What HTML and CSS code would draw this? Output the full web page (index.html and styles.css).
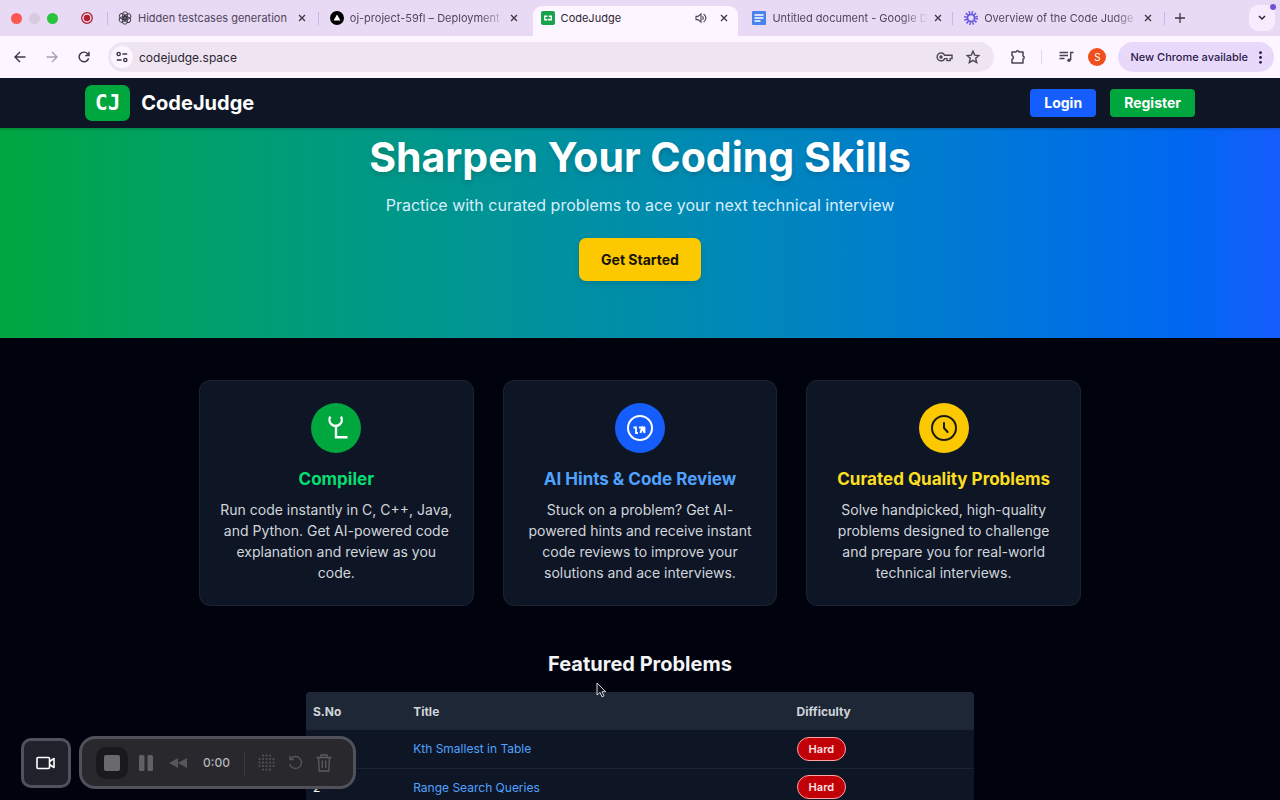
FILE: index.html
```html
<!DOCTYPE html>
<html lang="en">
  <head>
    <meta charset="UTF-8" />
    <meta name="viewport" content="width=device-width, initial-scale=1.0" />
    <title>CodeJudge</title>
    <link rel="stylesheet" href="styles.css">
  </head>
  <body>
    <div class="tab-strip">
      <div class="window-controls">
        <span class="light red"></span>
        <span class="light gray"></span>
        <span class="light green"></span>
      </div>
      <div class="pinned-tab">
        <svg width="14" height="14" viewBox="0 0 14 14"><circle cx="7" cy="7" r="5.3" fill="none" stroke="#b3202c" stroke-width="1.3"/><circle cx="7" cy="7" r="3.2" fill="#b3202c"/></svg>
      </div>
      <div class="tabs">
        <div class="tab">
          <svg class="favicon" viewBox="0 0 14 14" fill="none" stroke="#3c3743" stroke-width="0.9"><rect x="4.6" y="0.8" width="5" height="7.4" rx="2.4"/><rect x="4.6" y="0.8" width="5" height="7.4" rx="2.4" transform="rotate(60 7 7)"/><rect x="4.6" y="0.8" width="5" height="7.4" rx="2.4" transform="rotate(120 7 7)"/><rect x="4.6" y="0.8" width="5" height="7.4" rx="2.4" transform="rotate(180 7 7)"/><rect x="4.6" y="0.8" width="5" height="7.4" rx="2.4" transform="rotate(240 7 7)"/><rect x="4.6" y="0.8" width="5" height="7.4" rx="2.4" transform="rotate(300 7 7)"/></svg>
          <span class="tab-title">Hidden testcases generation</span>
          <button class="tab-close" aria-label="Close tab"><svg width="8" height="8" viewBox="0 0 8 8"><path d="M1 1l6 6M7 1L1 7"/></svg></button>
        </div>
        <div class="tab no-divider">
          <svg class="favicon" viewBox="0 0 14 14"><circle cx="7" cy="7" r="7" fill="#000"/><path d="M7 3.6l3.4 5.8H3.6z" fill="#fff"/></svg>
          <span class="tab-title fade">oj-project-59fl – Deployment</span>
          <button class="tab-close" aria-label="Close tab"><svg width="8" height="8" viewBox="0 0 8 8"><path d="M1 1l6 6M7 1L1 7"/></svg></button>
        </div>
        <div class="tab active no-divider">
          <svg class="favicon" viewBox="0 0 14 14"><rect width="14" height="14" rx="2" fill="#16a34a"/><path d="M6.4 5.2H3.8v3.6h2.6M7.8 5.2h2.5v3.6H7.8V7.6" fill="none" stroke="#fff" stroke-width="1.4"/></svg>
          <span class="tab-title">CodeJudge</span>
          <button class="tab-audio" aria-label="Mute tab"><svg width="12" height="12" viewBox="0 0 12 12" fill="none" stroke="#4a4453" stroke-width="1.1"><path d="M1 4.4h2L6 2v8L3 7.6H1z"/><path d="M7.6 4.2q1.4 1.8 0 3.6M8.6 1.8q4.6 4.2 0 8.4"/></svg></button>
          <button class="tab-close" aria-label="Close tab"><svg width="8" height="8" viewBox="0 0 8 8"><path d="M1 1l6 6M7 1L1 7"/></svg></button>
        </div>
        <div class="tab">
          <svg class="favicon" viewBox="0 0 14 14"><rect width="14" height="14" rx="1" fill="#4a82ee"/><path d="M2.5 4h9M2.5 7h9M2.5 10h6" stroke="#fff" stroke-width="1.4"/></svg>
          <span class="tab-title fade">Untitled document - Google D</span>
          <button class="tab-close" aria-label="Close tab"><svg width="8" height="8" viewBox="0 0 8 8"><path d="M1 1l6 6M7 1L1 7"/></svg></button>
        </div>
        <div class="tab">
          <svg class="favicon" viewBox="0 0 14 14" fill="none" stroke="#6657e0"><circle cx="7" cy="7" r="3.6" stroke-width="1.8"/><circle cx="7" cy="7" r="5.6" stroke-width="2.8" stroke-dasharray="1.4 1.53"/></svg>
          <span class="tab-title fade">Overview of the Code Judge</span>
          <button class="tab-close" aria-label="Close tab"><svg width="8" height="8" viewBox="0 0 8 8"><path d="M1 1l6 6M7 1L1 7"/></svg></button>
        </div>
      </div>
      <button class="new-tab" aria-label="New tab"><svg width="10" height="10" viewBox="0 0 10 10"><path d="M5 0v10M0 5h10" stroke="#3c3743" stroke-width="1.3"/></svg></button>
      <button class="tab-search" aria-label="Search tabs"><svg width="8" height="6" viewBox="0 0 8 6"><path d="M1 1l3 3 3-3" fill="none" stroke="#2b2633" stroke-width="1.5"/></svg></button>
    </div>

    <div class="toolbar">
      <div class="nav-buttons">
        <button aria-label="Back"><svg width="12" height="12" viewBox="0 0 12 12"><path d="M11.5 6H1.2M6 1L1 6l5 5"/></svg></button>
        <button class="disabled" aria-label="Forward"><svg width="12" height="12" viewBox="0 0 12 12"><path d="M.5 6h10.3M6 1l5 5-5 5"/></svg></button>
        <button aria-label="Reload"><svg width="12" height="12" viewBox="0 0 12 12"><path d="M10.6 7.2A4.8 4.8 0 1 1 9.6 2.8L11 4.3M11 .8v3.7H7.3"/></svg></button>
      </div>
      <div class="omnibox">
        <button class="site-info" aria-label="Site information"><svg width="12" height="12" viewBox="0 0 12 12" fill="none" stroke="#3c3743" stroke-width="1.4"><circle cx="2.7" cy="3" r="1.6"/><path d="M6.4 3h4.8M.8 9h4.8"/><circle cx="9.3" cy="9" r="1.6"/></svg></button>
        <input type="text" value="codejudge.space" aria-label="Address">
        <button aria-label="Passwords"><svg width="17" height="12" viewBox="0 0 17 12" fill="none" stroke="#4a4453" stroke-width="1.4"><path d="M8.7 4.2A4 4 0 1 0 8.7 7.6H11v2h3.2v-2H16V4.2z"/><circle cx="5" cy="6" r="1" fill="#4a4453"/></svg></button>
        <button aria-label="Bookmark"><svg width="14" height="14" viewBox="0 0 14 14" fill="none" stroke="#4a4453" stroke-width="1.4"><path d="M7 1.2l1.7 3.9 4.2.4-3.2 2.8 1 4.2L7 10.300l-3.700 2.200 1-4.200L1.100 5.500l4.200-.4z"/></svg></button>
      </div>
      <button class="tool extensions" aria-label="Extensions"><svg width="16" height="16" viewBox="0 0 16 16"><path d="M2 3h3.900a1.700 1.700 0 0 1 3.200 0H13v4a1.700 1.700 0 0 1 0 3.200V14H2v-3.700a2 2 0 0 0 0-3.800z" fill="none" stroke="#4a4453" stroke-width="1.5" stroke-linejoin="round"/></svg></button>
      <span class="tool-divider"></span>
      <button class="tool" aria-label="Media controls"><svg width="15" height="12" viewBox="0 0 15 12" fill="none" stroke="#4a4453" stroke-width="1.4"><path d="M.5 1.5h8.500M.5 4.500h8.500M.5 7.500h5M14.500 1.500h-2.800V9"/><circle cx="10" cy="9.200" r="1.700" fill="#4a4453" stroke="none"/></svg></button>
      <button class="avatar" aria-label="Profile">S</button>
      <button class="update">New Chrome available <svg width="3" height="13" viewBox="0 0 3 13" fill="#2a1a4a"><circle cx="1.5" cy="1.7" r="1.4"/><circle cx="1.5" cy="6.5" r="1.4"/><circle cx="1.5" cy="11.3" r="1.4"/></svg></button>
    </div>

    <div class="page">
      <nav class="navbar">
        <div class="navbar-inner">
          <a class="brand" href="#"><span class="brand-logo">CJ</span>CodeJudge</a>
          <div class="nav-links">
            <a class="btn btn-blue" href="#">Login</a>
            <a class="btn btn-green" href="#">Register</a>
          </div>
        </div>
      </nav>

      <section class="hero">
        <h1>Sharpen Your Coding Skills</h1>
        <p>Practice with curated problems to ace your next technical interview</p>
        <a class="cta" href="#">Get Started</a>
      </section>

      <section class="features">
        <div class="card">
          <div class="card-icon green">
            <svg width="28" height="28" viewBox="0 0 28 28" fill="none" stroke="#fff" stroke-width="2.4"><path d="M8.300 2.600A6.200 6.200 0 1 0 19 2.600M14 10.500V23.200H25.500"/></svg>
          </div>
          <h3>Compiler</h3>
          <p>Run code instantly in C, C++, Java, and Python. Get AI-powered code explanation and review as you code.</p>
        </div>
        <div class="card">
          <div class="card-icon blue">
            <svg width="28" height="28" viewBox="0 0 28 28" fill="none" stroke="#fff" stroke-width="2"><circle cx="14" cy="14" r="12"/><path d="M7.500 13.500H10V19h2M13 13.500h3l-1.500 5.200M16 13.500h3M18.500 13v6M14.500 19l2-5 2 5" stroke-width="1.8"/></svg>
          </div>
          <h3>AI Hints &amp; Code Review</h3>
          <p>Stuck on a problem? Get AI-powered hints and receive instant code reviews to improve your solutions and ace interviews.</p>
        </div>
        <div class="card">
          <div class="card-icon yellow">
            <svg width="28" height="28" viewBox="0 0 28 28" fill="none" stroke="#1a1a10" stroke-width="2" stroke-linecap="round" stroke-linejoin="round"><circle cx="14" cy="14" r="12"/><path d="M14 9v5l3.600 4"/></svg>
          </div>
          <h3>Curated Quality Problems</h3>
          <p>Solve handpicked, high-quality problems designed to challenge and prepare you for real-world technical interviews.</p>
        </div>
      </section>

      <section class="problems">
        <h2>Featured Problems</h2>
        <table>
          <thead>
            <tr><th class="col-no">S.No</th><th class="col-title">Title</th><th>Difficulty</th></tr>
          </thead>
          <tbody>
            <tr><td>1</td><td><a href="#">Kth Smallest in Table</a></td><td><span class="pill">Hard</span></td></tr>
            <tr><td>2</td><td><a href="#">Range Search Queries</a></td><td><span class="pill">Hard</span></td></tr>
          </tbody>
        </table>
      </section>
    </div>

    <div class="recorder">
      <button class="camera" aria-label="Camera"><svg width="20" height="14" viewBox="0 0 20 14" fill="none" stroke="#fff" stroke-width="1.6" stroke-linejoin="round"><rect x="1" y="1.5" width="12.5" height="11" rx="1"/><path d="M13.5 5.5L18 2.5v9l-4.5-3"/></svg></button>
      <div class="recorder-bar">
        <button class="stop" aria-label="Stop"><span></span></button>
        <button class="pause" aria-label="Pause"><svg width="14" height="16" viewBox="0 0 14 16" fill="#606065"><rect width="5.5" height="16" rx="1.5"/><rect x="8.5" width="5.5" height="16" rx="1.5"/></svg></button>
        <button class="rewind" aria-label="Rewind"><svg width="18" height="10" viewBox="0 0 18 10" fill="#56565b"><path d="M9 0v10L0 5zM18 0v10L9 5z"/></svg></button>
        <span class="time">0:00</span>
        <span class="bar-divider"></span>
        <button class="effects" aria-label="Effects"><svg width="17" height="17" viewBox="0 0 17 17" fill="none" stroke="#505055" stroke-width="2.2" stroke-linecap="round"><path d="M5 1.500v14.100M8.500 1.500v14.100M12 1.500v14.100M1.500 5h14.100M1.500 8.500h14.100M1.500 12h14.100" stroke-dasharray="0.1 3.4"/></svg></button>
        <button class="restart" aria-label="Restart"><svg width="15" height="15" viewBox="0 0 15 15" fill="none" stroke="#535358" stroke-width="1.4"><path d="M2.500 4A6 6 0 1 1 1.600 9M2 .8v3.700h3.800"/></svg></button>
        <button class="delete" aria-label="Delete"><svg width="16" height="18" viewBox="0 0 16 18" fill="none" stroke="#5c5c61" stroke-width="1.3"><path d="M.5 3.500h15M5 3.500v-2.500h6v2.500M2.500 3.500l.7 13.500h9.600l.7-13.500M6.300 6.500v7.500M9.700 6.500v7.500"/></svg></button>
      </div>
    </div>

    <svg class="cursor" width="11" height="16" viewBox="0 0 11 16"><path d="M1 1v12l3-2.600 2 4.400 2-.9-2-4.200h3.800z" fill="#10131c" stroke="#d5d7de" stroke-width="1"/></svg>
  </body>
</html>
```

FILE: styles.css
```css
* {
  box-sizing: border-box;
  margin: 0;
  padding: 0;
}

body {
  display: flex;
  flex-direction: column;
  height: 100vh;
  overflow: hidden;
  font-family: Inter, "Liberation Sans", sans-serif;
  color: #fff;
  background-color: #00020e;
}

a {
  text-decoration: none;
}

button {
  display: flex;
  align-items: center;
  justify-content: center;
  flex: none;
  border: none;
  background: none;
  font-family: inherit;
  cursor: pointer;
}

svg {
  display: block;
  flex: none;
}

/* browser tabs */
.tab-strip {
  display: flex;
  align-items: center;
  flex: none;
  height: 36px;
  background-color: #e8daf4;
  position: relative;
}

.window-controls {
  display: flex;
  gap: 7px;
  padding-left: 11px;
}

.light {
  width: 11px;
  height: 11px;
  border-radius: 50%;
}

.light.red {
  background-color: #fb5753;
}

.light.gray {
  background-color: #d8cbe0;
}

.light.green {
  background-color: #26c53d;
}

.pinned-tab {
  padding: 0 13px 0 22px;
}

.tabs {
  display: flex;
  align-items: center;
  flex: 0 1 1058px;
  min-width: 0;
  height: 100%;
  position: relative;
}

.tabs::before,
.tab::after {
  content: "";
  position: absolute;
  right: 0;
  top: 12px;
  width: 1px;
  height: 13px;
  background-color: #cbb4e8;
}

.tabs::before {
  left: 0;
}

.tab {
  display: flex;
  align-items: center;
  flex: 1;
  min-width: 0;
  height: 100%;
  padding: 0 12px 0 11px;
  position: relative;
  font-size: 11px;
  color: #4f465c;
}

.tab.no-divider::after {
  display: none;
}

.tab.active {
  height: 30px;
  margin: 6px 3px 0 2px;
  padding: 0 9px 6px 8px;
  border-radius: 9px 9px 0 0;
  background-color: #fdf5ff;
  color: #2b2633;
}

.favicon {
  width: 14px;
  height: 14px;
  margin-right: 6px;
}

.tab-title {
  flex: 1;
  white-space: nowrap;
}

.tab-title.fade {
  -webkit-mask-image: linear-gradient(to right, #000 130px, transparent 156px);
  mask-image: linear-gradient(to right, #000 130px, transparent 156px);
}

.tab-close {
  width: 10px;
  height: 16px;
  margin-left: 5px;
}

.tab-audio {
  margin-right: 7px;
}

.tab-close path {
  fill: none;
  stroke: #3c3743;
  stroke-width: 1.3;
}

.new-tab {
  width: 30px;
  height: 28px;
}

.tab-search {
  width: 26px;
  height: 26px;
  margin: 0 5px 0 auto;
  border-radius: 9px;
  background-color: #f7ecfd;
}

.tab-search::after {
  content: "";
  position: absolute;
  top: 4px;
  right: 4px;
  width: 6px;
  height: 6px;
  border-radius: 50%;
  background-color: #6b52d6;
}

/* browser toolbar */
.toolbar {
  display: flex;
  align-items: center;
  flex: none;
  height: 42px;
  padding: 0 6px 0 14px;
  background-color: #fdf5ff;
}

.nav-buttons {
  display: flex;
  gap: 20px;
  margin-right: 18px;
}

.nav-buttons path {
  fill: none;
  stroke: #3c3743;
  stroke-width: 1.4;
}

.nav-buttons .disabled path {
  stroke: #a9a0b0;
}

.omnibox {
  display: flex;
  align-items: center;
  flex: 1;
  gap: 13px;
  height: 30px;
  padding: 0 14px 0 3px;
  border-radius: 15px;
  background-color: #eee5f1;
}

.site-info {
  width: 22px;
  height: 22px;
  border-radius: 50%;
  background-color: #fdf5ff;
}

.omnibox input {
  flex: 1;
  min-width: 0;
  margin-left: -7px;
  border: none;
  outline: none;
  background: none;
  font-family: inherit;
  font-size: 12px;
  color: #2b2633;
}

.extensions {
  margin-left: 16px;
}

.tool-divider {
  width: 1px;
  height: 14px;
  margin: 0 17px 0 15px;
  background-color: #e6d5f2;
}

.avatar {
  width: 18px;
  height: 18px;
  margin: 0 12px 0 14px;
  border-radius: 50%;
  background-color: #f04e1a;
  font-size: 10px;
  color: #fff;
}

.update {
  gap: 11px;
  height: 30px;
  padding: 0 12px;
  border-radius: 15px;
  background-color: #e8d9fb;
  font-size: 11px;
  font-weight: 500;
  color: #2a1a4a;
}

/* page */
.page {
  flex: 1;
  min-height: 0;
  overflow: hidden;
}

.navbar {
  position: relative;
  background-color: #0e1625;
  box-shadow: 0 1px 3px rgba(0, 0, 0, 0.2);
}

.navbar-inner {
  display: flex;
  align-items: center;
  justify-content: space-between;
  max-width: 1138px;
  height: 50px;
  margin: 0 auto;
  padding: 0 14px;
}

.brand {
  display: flex;
  align-items: center;
  gap: 11px;
  font-size: 20px;
  font-weight: 700;
  color: #fff;
}

.brand-logo {
  padding: 0 10px;
  border-radius: 7px;
  background-color: #00a63e;
  font-family: "DejaVu Sans Mono", monospace;
  font-size: 21px;
  line-height: 36px;
}

.nav-links {
  display: flex;
  gap: 14px;
}

.btn {
  padding: 0 14px;
  border-radius: 4px;
  font-size: 14px;
  font-weight: 700;
  line-height: 28px;
  color: #fff;
}

.btn-blue {
  background-color: #155dfc;
}

.btn-green {
  background-color: #00a63e;
}

.hero {
  display: flex;
  flex-direction: column;
  align-items: center;
  padding: 4px 14px 57px;
  background-image: linear-gradient(to right in oklab, #00a63e, #155dfc);
  text-align: center;
}

.hero h1 {
  margin-bottom: 10px;
  font-size: 41px;
  font-weight: 700;
  line-height: 50px;
  text-shadow: 0 3px 5px rgba(0, 0, 0, 0.15);
}

.hero p {
  margin-bottom: 20px;
  font-size: 16px;
  line-height: 26px;
  color: #d8eefc;
}

.cta {
  padding: 0 22px;
  border-radius: 7px;
  background-color: #fcc800;
  box-shadow: 0 3px 6px rgba(0, 0, 0, 0.12);
  font-size: 14px;
  font-weight: 700;
  line-height: 43px;
  color: #14120a;
}

.features {
  display: grid;
  grid-template-columns: repeat(3, 1fr);
  gap: 29px;
  max-width: 910px;
  margin: 0 auto;
  padding: 42px 14px;
}

.card {
  display: flex;
  flex-direction: column;
  align-items: center;
  padding: 22px 20px;
  border: 1px solid #1b2433;
  border-radius: 11px;
  background-color: #0e1625;
  text-align: center;
}

.card-icon {
  display: flex;
  align-items: center;
  justify-content: center;
  width: 50px;
  height: 50px;
  margin-bottom: 14px;
  border-radius: 50%;
}

.card-icon.green {
  background-color: #00a63e;
}

.card-icon.blue {
  background-color: #155dfc;
}

.card-icon.yellow {
  background-color: #fcc800;
}

.card h3 {
  margin-bottom: 7px;
  font-size: 17px;
  font-weight: 700;
  line-height: 25px;
  color: #05df72;
}

.card-icon.blue + h3 {
  color: #51a2ff;
}

.card-icon.yellow + h3 {
  color: #fddf20;
}

.card p {
  font-size: 14px;
  line-height: 21px;
  color: #d1d5dc;
}

.problems {
  max-width: 668px;
  margin: 0 auto;
}

.problems h2 {
  margin-bottom: 12px;
  font-size: 20px;
  font-weight: 700;
  line-height: 32px;
  text-align: center;
  color: #f3f4f6;
}

.problems table {
  width: 100%;
  border-collapse: collapse;
  border-radius: 4px;
  overflow: hidden;
  background-color: #0e1625;
  font-size: 12px;
}

.problems th,
.problems td {
  height: 38px;
  padding: 0 7px;
  text-align: left;
}

.problems thead {
  background-color: #1e2735;
}

.problems th {
  font-weight: 700;
  color: #d1d5dc;
}

.problems tbody tr + tr {
  border-top: 1px solid #1b2433;
}

.col-no {
  width: 15%;
}

.problems .col-title {
  width: 57.4%;
}

.problems a {
  color: #51a2ff;
}

.pill {
  display: inline-block;
  padding: 0 11px;
  border: 1px solid #ffa2a2;
  border-radius: 12px;
  background-color: #c10007;
  font-size: 11px;
  font-weight: 600;
  line-height: 22px;
  color: #ffe2e2;
}

/* screen recorder controls */
.recorder {
  display: flex;
  align-items: center;
  gap: 8px;
  position: fixed;
  left: 21px;
  bottom: 11px;
}

.camera {
  width: 50px;
  height: 50px;
  border: 3px solid #50515a;
  border-radius: 10px;
  background-color: #1f222b;
}

.recorder-bar {
  display: flex;
  align-items: center;
  width: 277px;
  height: 53px;
  padding-left: 14px;
  border: 3px solid #50515a;
  border-radius: 16px;
  background-color: #28282d;
}

.stop {
  width: 32px;
  height: 32px;
  margin-right: 11px;
  border-radius: 10px;
  background-color: #1a1a1e;
}

.stop span {
  width: 16px;
  height: 16px;
  border-radius: 2px;
  background-color: #69696e;
}

.pause {
  margin-right: 16px;
}

.time {
  margin: 0 14px 0 16px;
  font-size: 12px;
  font-weight: 500;
  color: #b5b5ba;
}

.bar-divider {
  width: 1px;
  height: 24px;
  margin-right: 13px;
  background-color: #39393e;
}

.restart {
  margin: 0 13px;
}

.cursor {
  position: fixed;
  left: 596px;
  top: 682px;
}
```
